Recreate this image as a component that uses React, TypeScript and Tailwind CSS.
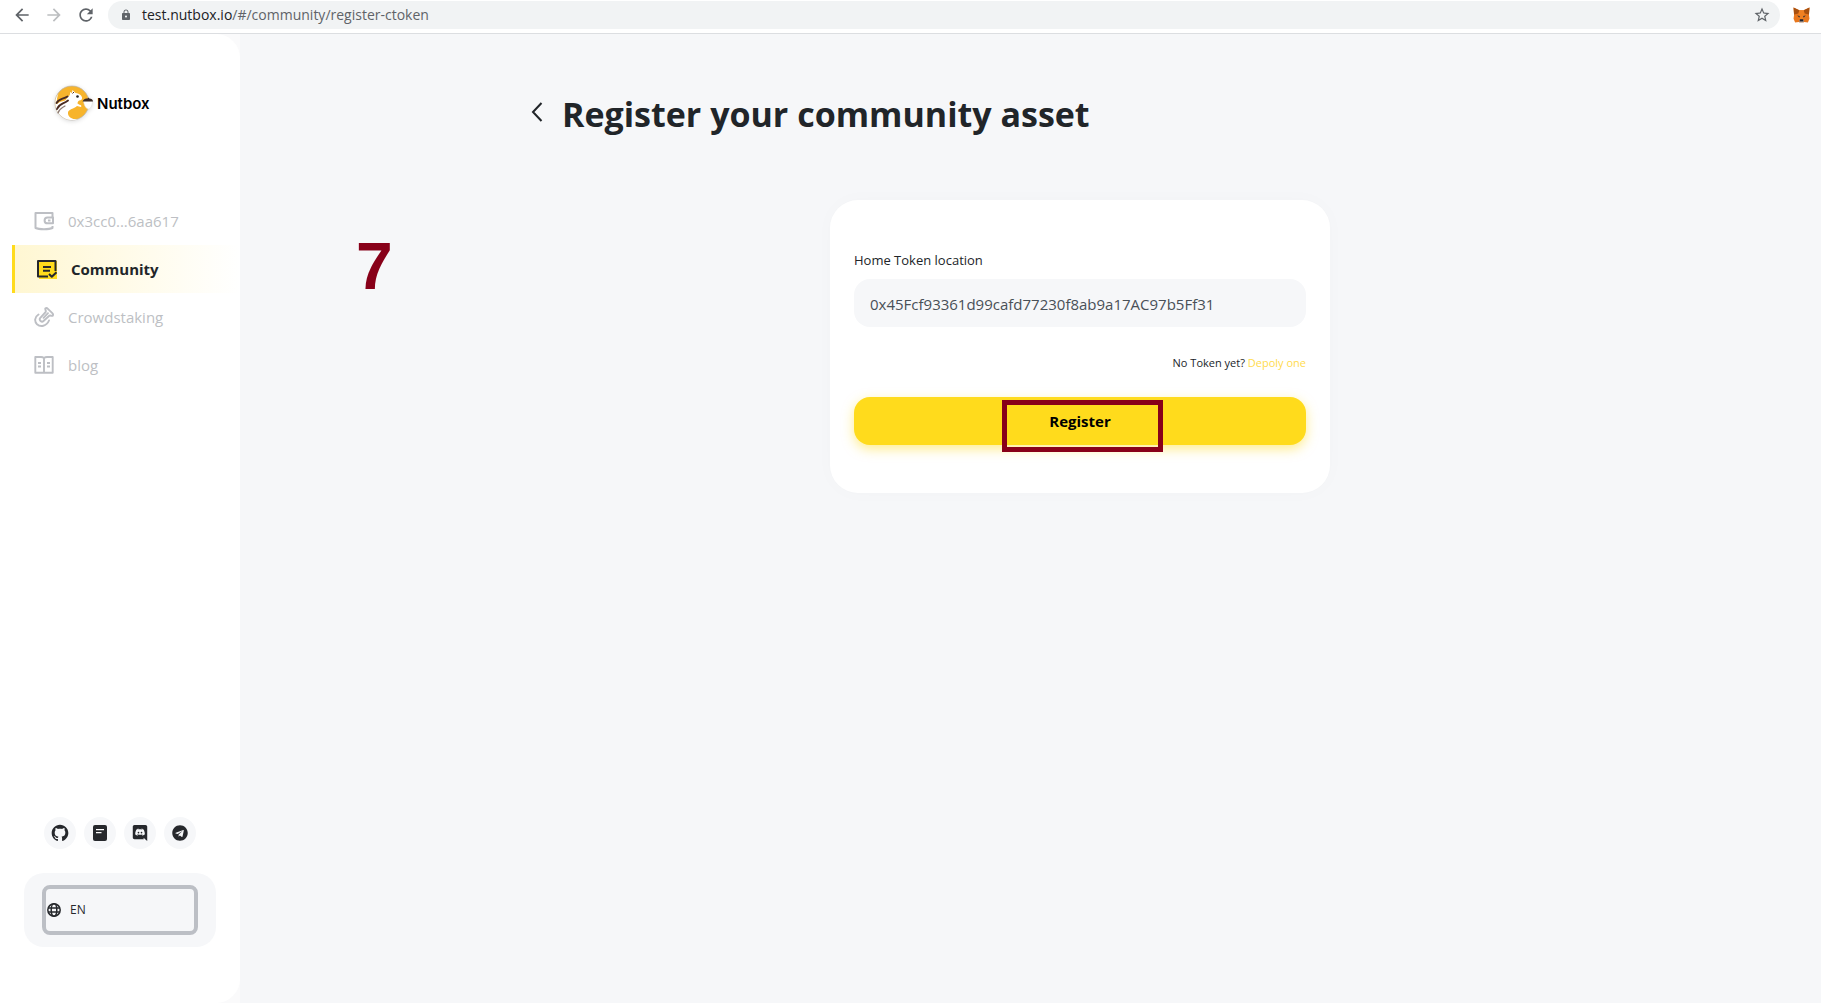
import type { ReactNode } from "react";
import { MdArrowBack, MdArrowForward, MdLock, MdRefresh, MdStarOutline } from "react-icons/md";
import { FaTelegram } from "react-icons/fa";
import { RiGithubFill } from "react-icons/ri";

function MetaMaskIcon() {
  return (
    <svg viewBox="0 0 32 30" className="h-4 w-[17px]" aria-hidden="true">
      <path d="M1 1 12 6h8L31 1l-1 14 1 7-3 7-7-1-3 2h-4l-3-2-7 1-3-7 1-7z" fill="#e8771d" />
      <path d="M1 1 12 6l-2 6-8 2zM31 1 20 6l2 6 8 2z" fill="#a8500f" />
      <path d="M12 6h8l2 10-3 8h-6l-3-8z" fill="#f08022" />
      <path d="m8 16 5 1-1 3zM24 16l-5 1 1 3z" fill="#3a3436" />
      <path d="M11 25h10l-2 5h-6z" fill="#d7c1b3" />
      <path d="M13 23h6l1 4h-8z" fill="#1d2330" />
    </svg>
  );
}

function NutboxLogo() {
  return (
    <svg viewBox="0 0 40 38" className="h-[38px] w-10 drop-shadow-sm" aria-hidden="true">
      <circle cx="18" cy="18" r="17" fill="#f7b42c" stroke="#b9b3a8" strokeWidth=".7" />
      <path
        d="M4.500 8.500C1.500 12 .8 17 1.500 21c1 7 7 13 15 14 3 .3 5 0 7-.6-6 0-10-3-9.500-7 .5-3.500 6-3.500 9-6.500l4 1c1-1 0-2-1.500-2.200l-2-1.300c0-2 1-3 3-3.200 2-.3 2-3 .5-4.700C25.500 9 23.500 8 21.500 8l-3-3-.5 3-2-1c.3 2 0 3-1.500 4.500-2 1.500-2 4-5 4.500-2.500.3-5 1.500-6.500 3-.5-4 .2-7.500 1.500-10.500z"
        fill="#fff"
      />
      <path d="M2.500 18c2.500-4.500 6-3.500 11-6.500M3 24c2.500-6 6-4.500 11-8.500" stroke="#4a2b22" strokeWidth="1.900" fill="none" strokeLinecap="round" />
      <path d="M4 28c1-4 4-5 7-7" stroke="#8d7b74" strokeWidth="1.200" fill="none" strokeLinecap="round" />
      <path d="M18.500 8.500 20 7" stroke="#4a2b22" strokeWidth="1" />
      <circle cx="23.500" cy="11.500" r="1.300" fill="#222" />
      <path d="M29.500 16c.5 5 3 8 5 8s4-4 4-8z" fill="#fff" stroke="#ddd" strokeWidth=".5" />
      <path d="M28.500 16.500c1-2.500 3-3 5-3l1-1 .8 1c2 0 3.700 1 3.700 3z" fill="#3b2a25" />
    </svg>
  );
}

function WalletIcon() {
  return (
    <svg viewBox="0 0 20 20" className="size-5" fill="none" stroke="currentColor" strokeWidth="2" strokeLinejoin="round" aria-hidden="true">
      <path d="M18.500 6V2h-17v15c2 .9 4.500 1.200 8.500 1.200s6.500-.3 8.500-1.200v-2" />
      <path d="M19 6.500h-5.500a2.900 2.900 0 0 0 0 5.800H19zM14 9.400h2.500" />
    </svg>
  );
}

function CommunityIcon() {
  return (
    <svg viewBox="0 0 20 20" className="size-5" fill="none" stroke="#26282c" strokeWidth="2" strokeLinejoin="round" aria-hidden="true">
      <path d="M2 2h18v18H2z" fill="#ffdb1c" stroke="none" />
      <path d="M11 17.500H1V2h17.500v10" />
      <path d="M6 8h8M6 11.800h7M12 15l2.800 2.800 4.700-4.500" />
    </svg>
  );
}

function StakingIcon() {
  return (
    <svg viewBox="0 0 20 20" className="size-5" fill="none" stroke="currentColor" strokeWidth="1.900" strokeLinecap="round" strokeLinejoin="round" aria-hidden="true">
      <path d="M4.500 7.500C.5 10 .2 14.500 3 17.200c3.300 3 9.500 2.300 12-3.700" />
      <path d="M11.300 1.500c1-.8 1.800-.5 2.600.3l4.400 4.400c.8.800 1 1.800.3 2.600-1.200.3-2-.6-3.300-.1L9.500 14c-1.800 1.700-5-.8-3.200-3.200L11.700 5c.6-1.400-.7-2.200-.4-3.500z" />
      <path d="m9.500 10.800 4.500-4.600" />
    </svg>
  );
}

function BookIcon() {
  return (
    <svg viewBox="0 0 20 20" className="size-5" fill="none" stroke="currentColor" strokeWidth="1.900" strokeLinejoin="round" aria-hidden="true">
      <path d="M10 3C9 2.200 8 2 7 2H1.300v15.700h17.400V2H13c-1 0-2 .2-3 1zM10 3v15" />
      <path d="M4 8h3M4 11.500h3M13 8h3M13 11.500h3" />
    </svg>
  );
}

function DocIcon() {
  return (
    <svg viewBox="0 0 16 16" className="size-4" aria-hidden="true">
      <rect x="1" y="0" width="14" height="16" rx="2" fill="#26282c" />
      <path d="M4 4.700h8M4 7.700h5.500" stroke="#fff" strokeWidth="1.200" />
    </svg>
  );
}

function DiscordIcon() {
  return (
    <svg viewBox="0 0 24 24" className="size-4" fill="currentColor" aria-hidden="true">
      <path d="M20.222 0c1.406 0 2.54 1.137 2.607 2.475V24l-2.677-2.273-1.47-1.338-1.604-1.398.666 2.205H3.71c-1.402 0-2.54-1.065-2.54-2.476V2.48C1.17 1.142 2.31.003 3.715.003h16.5L20.222 0zm-6.118 5.683h-.03l-.202.2c2.073.6 3.076 1.537 3.076 1.537-1.336-.668-2.54-1.002-3.744-1.137-.87-.135-1.74-.064-2.475 0h-.2c-.47 0-1.47.2-2.81.735-.467.203-.735.336-.735.336s1.002-1.002 3.21-1.537l-.135-.135s-1.672-.064-3.477 1.27c0 0-1.805 3.144-1.805 7.02 0 0 1 1.74 3.743 1.806 0 0 .4-.533.805-1.002-1.54-.468-2.14-1.404-2.14-1.404s.134.066.335.2h.06c.03 0 .044.015.06.03v.006c.016.016.03.03.06.03.33.136.66.27.93.4.466.202 1.065.403 1.8.536.93.135 1.996.2 3.21 0 .6-.135 1.2-.267 1.8-.535.39-.2.87-.4 1.397-.737 0 0-.6.936-2.205 1.404.33.466.795 1 .795 1 2.744-.06 3.81-1.8 3.87-1.726 0-3.87-1.815-7.02-1.815-7.02-1.635-1.214-3.165-1.26-3.435-1.26l.056-.02zm.168 4.413c.703 0 1.27.6 1.27 1.335 0 .74-.57 1.34-1.27 1.34-.7 0-1.27-.6-1.27-1.334.002-.74.573-1.338 1.27-1.338zm-4.543 0c.7 0 1.266.6 1.266 1.335 0 .74-.57 1.34-1.27 1.34-.7 0-1.27-.6-1.27-1.334 0-.74.57-1.338 1.27-1.338z" />
    </svg>
  );
}

function GlobeIcon() {
  return (
    <svg viewBox="0 0 14 14" className="size-[14px]" fill="none" stroke="#26282c" strokeWidth="1.500" aria-hidden="true">
      <circle cx="7" cy="7" r="6.200" />
      <ellipse cx="7" cy="7" rx="2.800" ry="6.200" />
      <path d="M1 5h12M1 9h12" />
    </svg>
  );
}

function BrowserBar() {
  return (
    <header className="flex h-[34px] shrink-0 items-center border-b border-[#dcdee1] bg-white pb-1 pr-[11px] text-[#5f6368]">
      <div className="flex w-[108px] items-center gap-3 pl-3">
        <button type="button" aria-label="Back"><MdArrowBack className="size-5" /></button>
        <button type="button" aria-label="Forward" className="text-[#bcbec0]"><MdArrowForward className="size-5" /></button>
        <button type="button" aria-label="Reload"><MdRefresh className="size-5" /></button>
      </div>
      <div className="flex h-7 flex-1 items-center rounded-full bg-[#f1f3f4] pl-3 pr-[9px]">
        <MdLock className="size-3" />
        <a href="#" className="ml-[10px] flex-1 text-sm">
          <span className="text-[#202124]">test.nutbox.io</span>/#/community/register-ctoken
        </a>
        <button type="button" aria-label="Bookmark"><MdStarOutline className="size-[18px]" /></button>
      </div>
      <button type="button" aria-label="MetaMask" className="ml-[13px]"><MetaMaskIcon /></button>
    </header>
  );
}

function NavItem({ icon, label, active }: { icon: ReactNode; label: string; active?: boolean }) {
  return (
    <a
      href="#"
      className={
        active
          ? "ml-3 flex h-12 items-center gap-[14px] border-l-[3px] border-[#ffdb1c] bg-linear-to-r from-[#fff7d2] to-white pl-[22px] text-[15px] font-bold text-[#212529]"
          : "ml-3 flex h-12 items-center gap-[14px] pl-[22px] text-[15px] text-[#bdbfc4]"
      }
    >
      {icon}
      {label}
    </a>
  );
}

function SocialLink({ label, children }: { label: string; children: ReactNode }) {
  return (
    <a href="#" aria-label={label} className="flex size-8 items-center justify-center rounded-full bg-[#f6f7f9] text-[#26282c]">
      {children}
    </a>
  );
}

function Sidebar() {
  return (
    <aside className="w-60 shrink-0 bg-[#fafafb]">
      <div className="flex h-full flex-col rounded-r-3xl bg-white pb-14 pt-[51px]">
        <a href="#" className="ml-[54px] flex items-center gap-[3px] font-['Inter'] text-[15px] font-semibold text-black">
          <NutboxLogo />
          Nutbox
        </a>
        <nav className="mt-[74px] flex flex-col">
          <NavItem icon={<WalletIcon />} label="0x3cc0...6aa617" />
          <NavItem icon={<CommunityIcon />} label="Community" active />
          <NavItem icon={<StakingIcon />} label="Crowdstaking" />
          <NavItem icon={<BookIcon />} label="blog" />
        </nav>
        <div className="mt-auto flex justify-center gap-2">
          <SocialLink label="GitHub"><RiGithubFill className="size-5" /></SocialLink>
          <SocialLink label="Docs"><DocIcon /></SocialLink>
          <SocialLink label="Discord"><DiscordIcon /></SocialLink>
          <SocialLink label="Telegram"><FaTelegram className="size-4" /></SocialLink>
        </div>
        <div className="mx-6 mt-6 rounded-[20px] bg-[#f6f7f9] px-[18px] py-3">
          <label className="flex h-[50px] items-center gap-[9px] rounded-lg border-4 border-[#bcbfc5] pl-px">
            <GlobeIcon />
            <select aria-label="Language" className="flex-1 appearance-none bg-transparent text-xs text-[#26282c] outline-none">
              <option>EN</option>
            </select>
          </label>
        </div>
      </div>
    </aside>
  );
}

function RegisterCard() {
  return (
    <form className="mx-auto mt-[62px] w-full max-w-[500px] rounded-[28px] bg-white px-6 pb-12 pt-[50px] shadow-[0_0_20px_rgba(0,0,0,0.02)]">
      <label htmlFor="token" className="block text-[13px] leading-5 text-[#212529]">Home Token location</label>
      <input
        id="token"
        defaultValue="0x45Fcf93361d99cafd77230f8ab9a17AC97b5Ff31"
        className="mt-[9px] block h-12 w-full rounded-2xl bg-[#f6f7f9] px-4 pt-0.5 text-[15px] text-[#495057] outline-none"
      />
      <p className="mt-[26px] text-right text-[11px] leading-5 text-[#212529]">
        No Token yet? <a href="#" className="text-[#ffdb4d]">Depoly one</a>
      </p>
      <div className="relative mt-6">
        <button type="button" className="block h-12 w-full rounded-2xl bg-[#ffdb1c] text-[15px] font-bold text-black shadow-[0_4px_12px_rgba(255,219,28,0.5)]">
          Register
        </button>
        <div className="pointer-events-none absolute left-[148px] top-[3px] h-[52px] w-[161px] border-[5px] border-[#880019]" />
      </div>
    </form>
  );
}

export default function App() {
  return (
    <div className="flex min-h-screen flex-col bg-[#f6f7f9] font-['Open_Sans',sans-serif]">
      <BrowserBar />
      <div className="flex flex-1">
        <Sidebar />
        <main className="relative flex-1 pl-[99px] pt-14">
          <div className="absolute left-[116px] top-[195px] font-['Liberation_Sans',sans-serif] text-[66px] font-bold leading-[74px] text-[#880019]">7</div>
          <div className="mx-auto max-w-[1140px] px-5">
            <div className="flex items-center gap-[18px] text-[#212529]">
              <button type="button" aria-label="Go back" className="pb-1">
                <svg viewBox="0 0 14 20" className="h-5 w-[14px]" fill="none" stroke="currentColor" strokeWidth="2" aria-hidden="true">
                  <path d="M11.500 1 3 10l8.500 9" />
                </svg>
              </button>
              <h1 className="text-[34px] font-bold leading-12">Register your community asset</h1>
            </div>
            <RegisterCard />
          </div>
        </main>
      </div>
    </div>
  );
}
